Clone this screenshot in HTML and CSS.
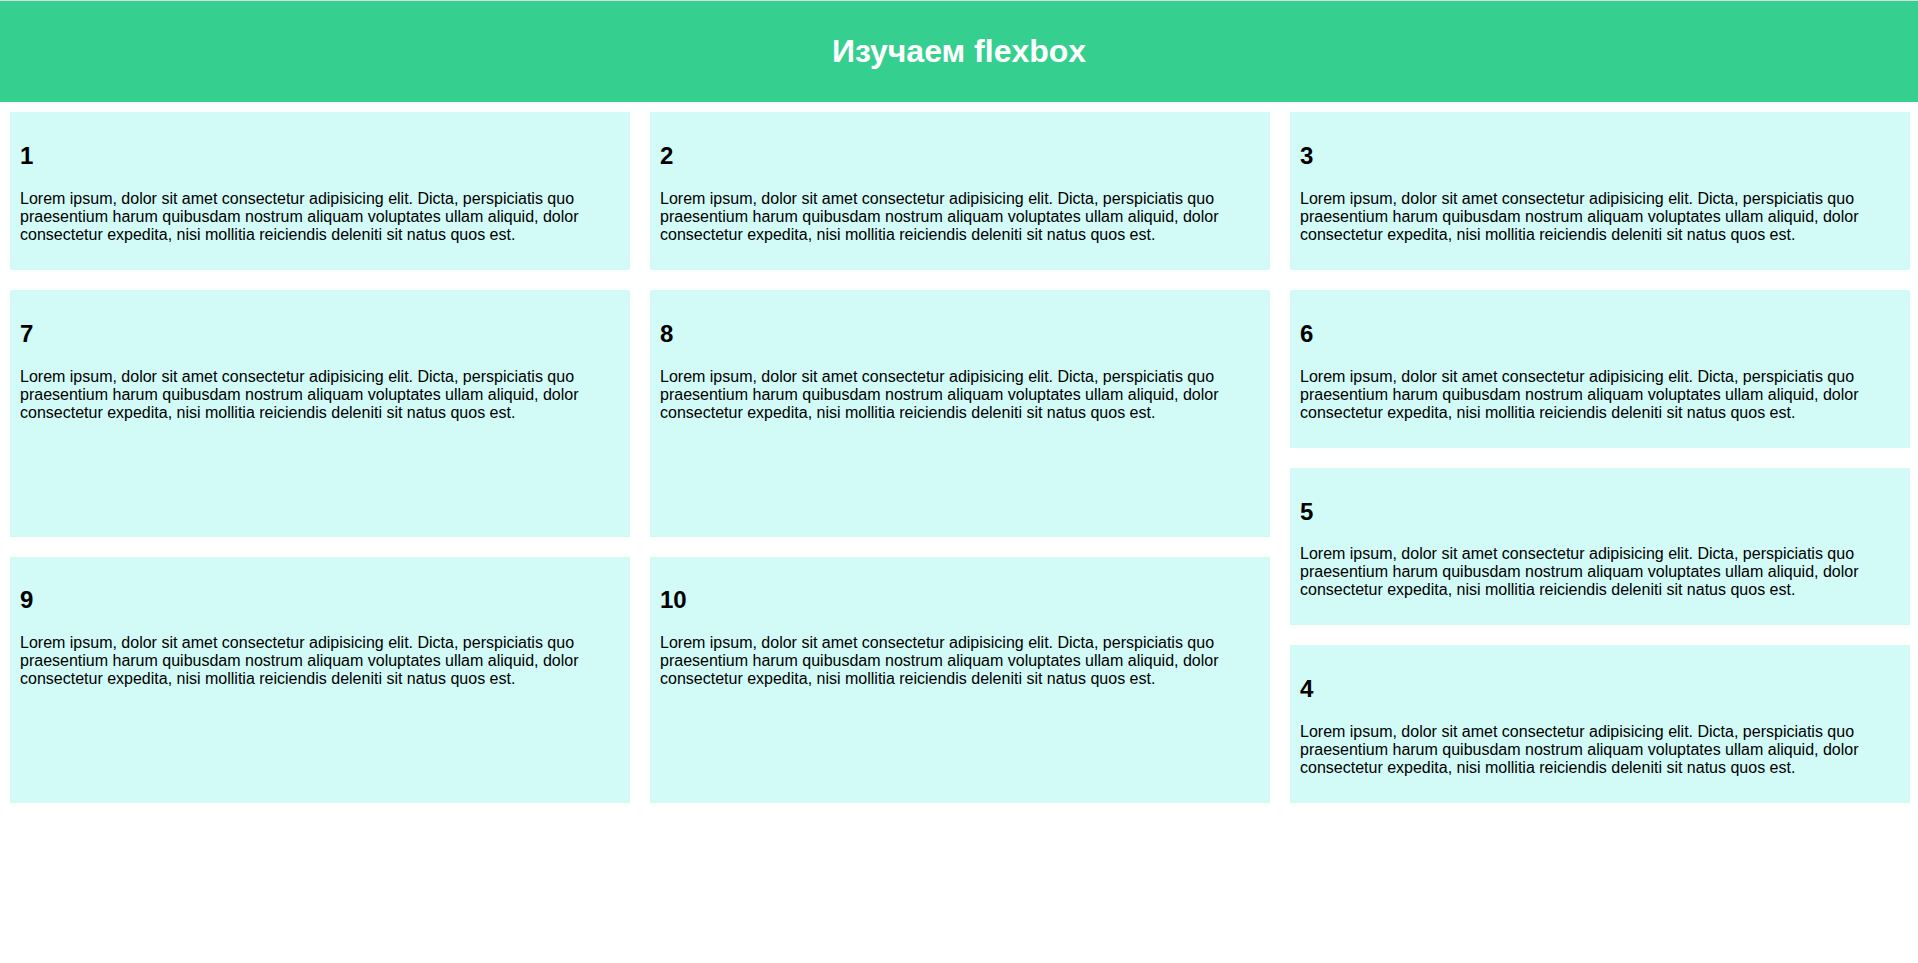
FILE: index.html
```html
<!DOCTYPE html>
<html lang="ru">
<head>
<meta charset="utf-8">
<title>Изучаем flexbox</title>
<link rel="stylesheet" href="styles.css">
</head>
<body>
<header class="header">
  <h1 class="header__title">Изучаем flexbox</h1>
</header>
<main class="board">
  <div class="card">
    <h2 class="card__title">1</h2>
    <p class="card__text">Lorem ipsum, dolor sit amet consectetur adipisicing elit. Dicta, perspiciatis quo praesentium harum quibusdam nostrum aliquam voluptates ullam aliquid, dolor consectetur expedita, nisi mollitia reiciendis deleniti sit natus quos est.</p>
  </div>
  <div class="card">
    <h2 class="card__title">2</h2>
    <p class="card__text">Lorem ipsum, dolor sit amet consectetur adipisicing elit. Dicta, perspiciatis quo praesentium harum quibusdam nostrum aliquam voluptates ullam aliquid, dolor consectetur expedita, nisi mollitia reiciendis deleniti sit natus quos est.</p>
  </div>
  <div class="card">
    <h2 class="card__title">3</h2>
    <p class="card__text">Lorem ipsum, dolor sit amet consectetur adipisicing elit. Dicta, perspiciatis quo praesentium harum quibusdam nostrum aliquam voluptates ullam aliquid, dolor consectetur expedita, nisi mollitia reiciendis deleniti sit natus quos est.</p>
  </div>
  <div class="board__left">
    <div class="card">
      <h2 class="card__title">7</h2>
      <p class="card__text">Lorem ipsum, dolor sit amet consectetur adipisicing elit. Dicta, perspiciatis quo praesentium harum quibusdam nostrum aliquam voluptates ullam aliquid, dolor consectetur expedita, nisi mollitia reiciendis deleniti sit natus quos est.</p>
    </div>
    <div class="card">
      <h2 class="card__title">8</h2>
      <p class="card__text">Lorem ipsum, dolor sit amet consectetur adipisicing elit. Dicta, perspiciatis quo praesentium harum quibusdam nostrum aliquam voluptates ullam aliquid, dolor consectetur expedita, nisi mollitia reiciendis deleniti sit natus quos est.</p>
    </div>
    <div class="card">
      <h2 class="card__title">9</h2>
      <p class="card__text">Lorem ipsum, dolor sit amet consectetur adipisicing elit. Dicta, perspiciatis quo praesentium harum quibusdam nostrum aliquam voluptates ullam aliquid, dolor consectetur expedita, nisi mollitia reiciendis deleniti sit natus quos est.</p>
    </div>
    <div class="card">
      <h2 class="card__title">10</h2>
      <p class="card__text">Lorem ipsum, dolor sit amet consectetur adipisicing elit. Dicta, perspiciatis quo praesentium harum quibusdam nostrum aliquam voluptates ullam aliquid, dolor consectetur expedita, nisi mollitia reiciendis deleniti sit natus quos est.</p>
    </div>
  </div>
  <div class="board__right">
    <div class="card">
      <h2 class="card__title">4</h2>
      <p class="card__text">Lorem ipsum, dolor sit amet consectetur adipisicing elit. Dicta, perspiciatis quo praesentium harum quibusdam nostrum aliquam voluptates ullam aliquid, dolor consectetur expedita, nisi mollitia reiciendis deleniti sit natus quos est.</p>
    </div>
    <div class="card">
      <h2 class="card__title">5</h2>
      <p class="card__text">Lorem ipsum, dolor sit amet consectetur adipisicing elit. Dicta, perspiciatis quo praesentium harum quibusdam nostrum aliquam voluptates ullam aliquid, dolor consectetur expedita, nisi mollitia reiciendis deleniti sit natus quos est.</p>
    </div>
    <div class="card">
      <h2 class="card__title">6</h2>
      <p class="card__text">Lorem ipsum, dolor sit amet consectetur adipisicing elit. Dicta, perspiciatis quo praesentium harum quibusdam nostrum aliquam voluptates ullam aliquid, dolor consectetur expedita, nisi mollitia reiciendis deleniti sit natus quos est.</p>
    </div>
  </div>
</main>
</body>
</html>
```

FILE: styles.css
```css
html, body {
  margin: 0;
  padding: 0;
  background: #ffffff;
}

body {
  font-family: "Liberation Sans", Arial, sans-serif;
  color: #000000;
  border-top: 1px solid #dadada;
}

.header {
  background: #35d08f;
  padding: 32px 0;
  text-align: center;
}

.header__title {
  margin: 0;
  font-size: 32px;
  font-weight: bold;
  color: #ffffff;
}

.board {
  display: grid;
  grid-template-columns: repeat(3, 1fr);
  gap: 20px;
  padding: 10px 8px 0 10px;
}

.board__left {
  grid-column: span 2;
  display: grid;
  grid-template-columns: 1fr 1fr;
  grid-template-rows: 1fr 1fr;
  gap: 20px;
}

.board__right {
  display: flex;
  flex-direction: column-reverse;
  gap: 20px;
}

.card {
  background: #d2faf6;
  padding: 10px;
}

.card__title {
  margin: 0.83em 0;
  font-size: 24px;
  font-weight: bold;
}

.card__text {
  margin: 1em 0;
  font-size: 16px;
  line-height: 18px;
}
```
